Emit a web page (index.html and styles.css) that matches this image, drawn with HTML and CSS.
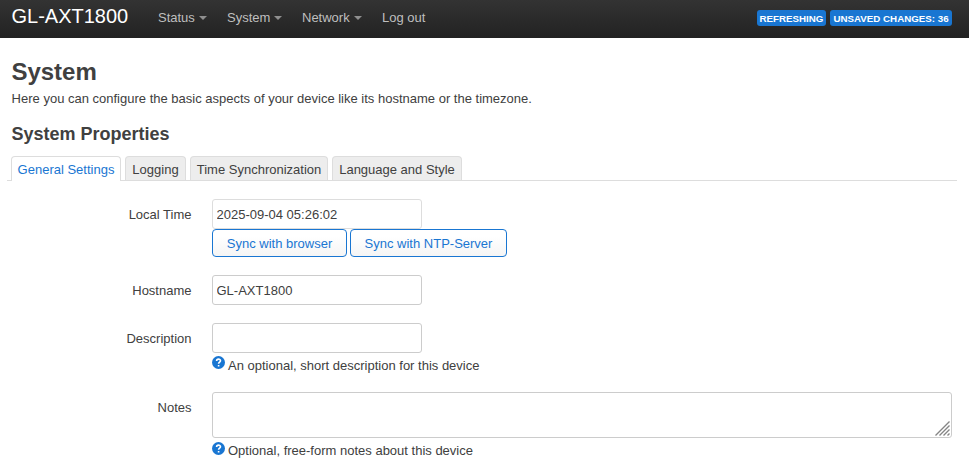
FILE: index.html
```html
<!DOCTYPE html>
<html lang="en">
<head>
<meta charset="utf-8">
<title>GL-AXT1800 - System</title>
<link rel="stylesheet" href="styles.css">
</head>
<body>
<header class="topbar">
  <a class="brand">GL-AXT1800</a>
  <nav class="menu">
    <a class="menu-item dropdown w-status"><span>Status</span></a>
    <a class="menu-item dropdown w-system"><span>System</span></a>
    <a class="menu-item dropdown w-network"><span>Network</span></a>
    <a class="menu-item"><span>Log out</span></a>
  </nav>
  <div class="indicators">
    <span class="badge badge-refresh"><span>Refreshing</span></span>
    <span class="badge badge-changes"><span>Unsaved Changes: 36</span></span>
  </div>
</header>
<main class="content">
  <h2>System</h2>
  <p class="intro"><span>Here you can configure the basic aspects of your device like its hostname or the timezone.</span></p>
  <h3>System Properties</h3>
  <ul class="tabs">
    <li class="tab active t-general"><span>General Settings</span></li>
    <li class="tab t-logging"><span>Logging</span></li>
    <li class="tab t-time"><span>Time Synchronization</span></li>
    <li class="tab t-language"><span>Language and Style</span></li>
  </ul>
  <form class="fields">
    <div class="row">
      <label>Local Time</label>
      <div class="field">
        <input class="readonly" type="text" value="2025-09-04 05:26:02" readonly>
        <div class="buttons">
          <button class="b-browser" type="button">Sync with browser</button>
          <button class="b-ntp" type="button">Sync with NTP-Server</button>
        </div>
      </div>
    </div>
    <div class="row">
      <label>Hostname</label>
      <div class="field"><input type="text" value="GL-AXT1800"></div>
    </div>
    <div class="row">
      <label>Description</label>
      <div class="field">
        <input type="text">
        <div class="hint">
          <svg class="help" viewBox="0 0 13 13"><circle cx="6.5" cy="6.5" r="6.5"/><path d="M4.6 4.9C4.6 2.5 8.5 2.5 8.5 4.8C8.5 6.2 6.6 6.2 6.6 7.8M6.6 9V10.5"/></svg>
          <span>An optional, short description for this device</span>
        </div>
      </div>
    </div>
    <div class="row">
      <label>Notes</label>
      <div class="field wide">
        <div class="area">
          <textarea></textarea>
          <svg class="grip" viewBox="0 0 15 15"><path d="M.5 14.5L14.5.5M4.5 14.5L14.5 4.5M8.5 14.5L14.5 8.5M12.5 14.5L14.5 12.5"/></svg>
        </div>
        <div class="hint hint-notes">
          <svg class="help" viewBox="0 0 13 13"><circle cx="6.5" cy="6.5" r="6.5"/><path d="M4.6 4.9C4.6 2.5 8.5 2.5 8.5 4.8C8.5 6.2 6.6 6.2 6.6 7.8M6.6 9V10.5"/></svg>
          <span>Optional, free-form notes about this device</span>
        </div>
      </div>
    </div>
  </form>
</main>
</body>
</html>
```
FILE: styles.css
```css
* { box-sizing: border-box; }
body {
  margin: 0;
  background: #fff;
  color: #404040;
  font: 13px/18px "Liberation Sans", Arial, sans-serif;
  overflow: hidden;
}
.topbar {
  display: flex;
  height: 38px;
  padding: 0 17px 0 11.5px;
  background: linear-gradient(#333, #222);
}
.brand {
  width: 136.5px;
  color: #fff;
  font-size: 20px;
  line-height: 32px;
}
.menu { display: flex; }
.menu-item {
  padding: 9px 10px 0;
  color: #bfbfbf;
  white-space: nowrap;
}
.w-status { width: 69px; }
.w-system { width: 75px; }
.w-network { width: 80px; }
.dropdown::after {
  content: "";
  display: inline-block;
  margin-left: 4px;
  vertical-align: 2px;
  border: 4px solid transparent;
  border-top-color: #8f8f8f;
  border-bottom: 0;
}
.indicators {
  display: flex;
  gap: 4px;
  margin-left: auto;
  padding-top: 10px;
}
.badge {
  height: 16px;
  border-radius: 3px;
  background: #1976d2;
  color: #fff;
  font-size: 9.75px;
  font-weight: bold;
  line-height: 17px;
  text-align: center;
  text-transform: uppercase;
  white-space: nowrap;
}
.badge-refresh { width: 69px; }
.badge-changes { width: 122px; }
.content { padding: 16px 12px 0 12px; }
h2 { margin: 0 0 0 -.6px; font-size: 24px; line-height: 36px; }
.intro { margin: 0 0 0 -.4px; }
h3 { margin: 8px 0 0 -.5px; font-size: 18px; line-height: 36px; }
.tabs {
  display: flex;
  gap: 4px;
  height: 29px;
  margin: 0 0 0 -5px;
  padding: 4px 0 0 4px;
  list-style: none;
  border-bottom: 1px solid #ddd;
}
.tab {
  height: 24px;
  border: 1px solid #ddd;
  border-bottom: 0;
  border-radius: 4px 4px 0 0;
  background: #ededed;
  line-height: 25px;
  text-align: center;
  white-space: nowrap;
}
.tab.active { height: 25px; background: #fff; color: #1976d2; }
.t-general { width: 110px; }
.t-logging { width: 61px; }
.t-time { width: 138px; }
.t-language { width: 130px; }
.fields { padding-top: 18px; }
.row { display: flex; margin-bottom: 18px; }
label { width: 179.5px; margin-right: 20.5px; padding-top: 7px; text-align: right; }
.field { width: 300px; }
.field.wide { width: 740px; }
input, textarea {
  display: block;
  border: 1px solid #ccc;
  border-radius: 3px;
  background: #fff;
  color: #404040;
  font: 13px/18px "Liberation Sans", Arial, sans-serif;
  outline: 0;
}
input { width: 210px; height: 30px; padding: 4px 4px 4px 3.5px; }
.readonly { border-color: #ddd; }
.buttons { display: flex; gap: 3px; }
button {
  height: 28px;
  padding: 2px 0 0;
  border: 1px solid #1976d2;
  border-radius: 4px;
  background: linear-gradient(#fff, #fff 25%, #f5f5f5);
  color: #1976d2;
  font: 13px/18px "Liberation Sans", Arial, sans-serif;
  white-space: nowrap;
}
.b-browser { width: 135px; }
.b-ntp { width: 157px; }
.hint { display: flex; gap: 3px; height: 21px; padding-top: 3px; line-height: 20px; white-space: nowrap; }
.help { width: 13px; height: 13px; flex: none; }
.help circle { fill: #1976d2; }
.help path { fill: none; stroke: #fff; stroke-width: 1.6; }
.area { position: relative; }
textarea { width: 740px; height: 46px; resize: none; }
.grip { position: absolute; right: 2px; bottom: 2px; width: 15px; height: 15px; }
.grip path { fill: none; stroke: #858585; stroke-width: 1.4; }
.hint-notes { padding-top: 4px; line-height: 18px; }
```
